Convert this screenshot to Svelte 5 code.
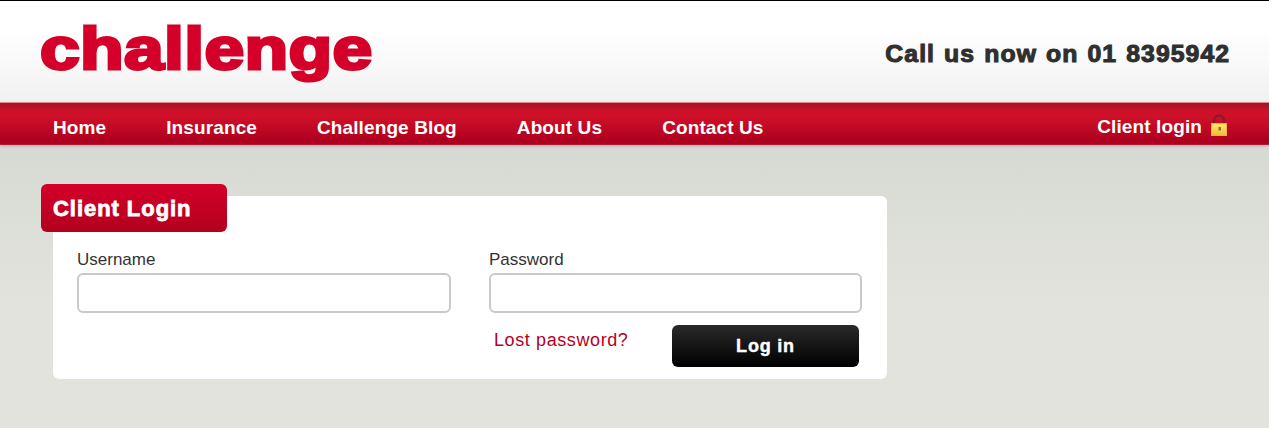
<script>
  const links = ['Home', 'Insurance', 'Challenge Blog', 'About Us', 'Contact Us'];
</script>

<div class="page">
  <header class="top">
    <div class="logo">challenge</div>
    <div class="phone">Call us now on 01 8395942</div>
  </header>
  <nav class="nav">
    <ul class="links">
      {#each links as l}
        <li>{l}</li>
      {/each}
    </ul>
    <div class="client">
      <span>Client login</span>
      <svg width="18" height="22" viewBox="0 0 18 22">
        <path d="M4 11V6.500a5 5 0 0 1 10 0V11" fill="none" stroke="#8c1a2c" stroke-width="2.400" />
        <rect x="1.500" y="9.500" width="15" height="12" fill="url(#lk)" stroke="#f7a94f" />
        <rect x="8.500" y="13" width="2.500" height="3.500" fill="#8b7a1e" />
        <defs>
          <linearGradient id="lk" x1="0" y1="0" x2="0" y2="1">
            <stop offset="0" stop-color="#ffec60" />
            <stop offset="1" stop-color="#f2b93c" />
          </linearGradient>
        </defs>
      </svg>
    </div>
  </nav>
  <main class="content">
    <section class="card">
      <h2 class="tab">Client Login</h2>
      <div class="fields">
        <label class="field">
          <span>Username</span>
          <input type="text" />
        </label>
        <label class="field">
          <span>Password</span>
          <input type="password" />
        </label>
      </div>
      <div class="actions">
        <a class="lost" href="#lost">Lost password?</a>
        <button class="login" type="button">Log in</button>
      </div>
    </section>
  </main>
</div>

<style>
  :global(body) {
    margin: 0;
    background: #e1e3dc;
  }
  .page {
    height: 428px;
    overflow: hidden;
    display: flex;
    flex-direction: column;
    font-family: "Liberation Sans", Arial, sans-serif;
    background: linear-gradient(#d7dad3 146px, #e1e3dc 300px);
  }
  .top {
    height: 102px;
    flex: none;
    box-sizing: border-box;
    border-top: 1px solid #000;
    background: linear-gradient(#fff 30%, #f1f1f2);
    display: flex;
    justify-content: space-between;
    align-items: center;
    padding: 0 39px 0 41px;
  }
  .logo {
    font-size: 60px;
    font-weight: 700;
    color: #d40029;
    -webkit-text-stroke: 3px #d40029;
    letter-spacing: 0.300px;
    line-height: 70px;
    margin-top: -5px;
    margin-left: -1px;
    transform: scaleX(1.190);
    transform-origin: left center;
  }
  .phone {
    font-size: 23px;
    font-weight: 700;
    color: #2f2f2f;
    -webkit-text-stroke: 1px #2f2f2f;
    letter-spacing: 1px;
    word-spacing: 1px;
    margin-top: 5px;
    transform: scaleX(1.077);
    transform-origin: right center;
  }
  .nav {
    height: 43px;
    flex: none;
    box-sizing: border-box;
    border-top: 1px solid #e08a94;
    background: linear-gradient(#a01226 0, #cf1029 8px, #cf1029 14px, #ae001f 38px, #ae001f 41px, #d06070 43px);
    box-shadow: 0 1px 3px rgba(0, 0, 0, 0.2);
    display: flex;
    justify-content: space-between;
    align-items: center;
    padding: 0 41px 0 53px;
    color: #fff;
    font-size: 19px;
    font-weight: 700;
    letter-spacing: 0.110px;
  }
  .links {
    display: flex;
    gap: 60px;
    list-style: none;
    margin: 8px 0 0;
    padding: 0;
  }
  .client {
    display: flex;
    align-items: center;
    gap: 8px;
    margin-top: 4px;
  }
  .client span {
    margin-top: 1px;
  }
  .client svg {
    margin-top: -2px;
  }
  .content {
    padding: 51px 0 0 53px;
  }
  .card {
    position: relative;
    box-sizing: border-box;
    width: 834px;
    height: 183px;
    background: #fff;
    border-radius: 6px;
    padding: 54px 25px 0 24px;
  }
  .tab {
    position: absolute;
    left: -12px;
    top: -12px;
    width: 186px;
    height: 48px;
    box-sizing: border-box;
    margin: 0;
    padding-left: 12px;
    line-height: 49px;
    border-radius: 6px;
    background: linear-gradient(#d40029, #b3001f);
    color: #fff;
    font-size: 22px;
    font-weight: 700;
    -webkit-text-stroke: 0.800px #fff;
    letter-spacing: 0.950px;
  }
  .fields {
    display: grid;
    grid-template-columns: 374px 373px;
    gap: 38px;
  }
  .field {
    display: flex;
    flex-direction: column;
    gap: 3px;
    color: #333;
    font-size: 17px;
    line-height: 20px;
  }
  input {
    height: 40px;
    box-sizing: border-box;
    border: 2px solid #c9c9c6;
    border-radius: 6px;
    background: #fff;
    outline: none;
    margin: 0;
  }
  .actions {
    display: flex;
    margin: 12px 0 0 417px;
  }
  .lost {
    color: #b3001f;
    text-decoration: none;
    font-size: 18px;
    letter-spacing: 0.600px;
    line-height: 30px;
    width: 178px;
  }
  .login {
    width: 187px;
    height: 42px;
    border: 0;
    border-radius: 6px;
    background: linear-gradient(#2a2a2a, #000);
    color: #fff;
    font-family: inherit;
    font-size: 18px;
    font-weight: 700;
    letter-spacing: 0.800px;
    -webkit-text-stroke: 0.400px #fff;
    padding: 0;
  }
</style>
